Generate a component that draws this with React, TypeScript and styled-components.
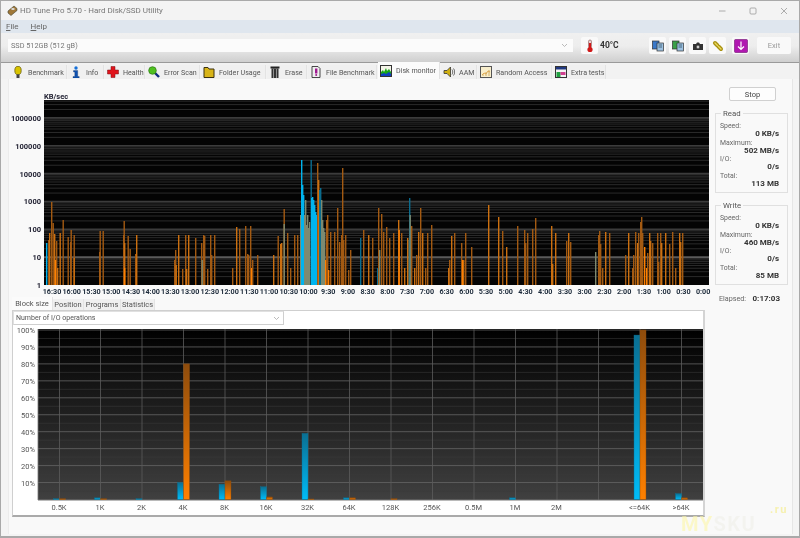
import React from 'react'
import styled, { createGlobalStyle } from 'styled-components'

const GlobalStyle = createGlobalStyle`
  html, body { margin: 0; padding: 0; background: #f4f4f4; }
  * { box-sizing: border-box; }
  body { font-family: Roboto, "Liberation Sans", Arial, sans-serif; }
`

const Win = styled.div`
  width: 800px;
  height: 538px;
  display: flex;
  flex-direction: column;
  background: #f4f4f4;
  border: 1px solid #a9a9a9;
  border-bottom-width: 2px;
  overflow: hidden;
  color: #4a4a4a;
  font-size: 8px;
  filter: blur(0.4px);
`
const TitleBar = styled.div`
  height: 19px;
  display: flex;
  align-items: center;
  padding-left: 6px;
  background: #f3f3f3;
`
const TitleText = styled.div`
  flex: 1;
  margin-left: 2px;
  font-size: 8px;
  color: #777;
`
const WinButton = styled.div`
  width: 31px;
  height: 19px;
  display: flex;
  align-items: center;
  justify-content: center;
`
const MenuBar = styled.div`
  height: 13px;
  display: flex;
  align-items: center;
  gap: 12px;
  padding-left: 5px;
  background: #dfe6ee;
  font-size: 8px;
  color: #666;
  u { text-decoration: underline; }
`
const ToolBar = styled.div`
  height: 30px;
  display: flex;
  align-items: flex-start;
  padding: 6px 0 0 7px;
  background: linear-gradient(#f0f0f0 0%, #ededed 45%, #cfcfcf 100%);
  border-bottom: 1px solid #9a9a9a;
`
const DriveSelect = styled.div`
  flex: 0 0 565px;
  height: 13px;
  display: flex;
  align-items: center;
  justify-content: space-between;
  padding: 0 5px 0 3px;
  background: #fbfbfb;
  color: #777;
  font-size: 7.3px;
`
const IconButton = styled.div<{ $ml?: number; $wide?: boolean }>`
  width: ${(p) => (p.$wide ? 34 : 17)}px;
  height: 17px;
  margin-top: -2px;
  margin-left: ${(p) => p.$ml ?? 0}px;
  display: flex;
  align-items: center;
  justify-content: center;
  background: #f9f9f9;
  border-radius: 2px;
  color: #999;
  font-size: 7.5px;
`
const Temp = styled.div`
  width: 30px;
  margin-left: 2px;
  height: 13px;
  line-height: 13px;
  font-size: 8.5px;
  font-weight: bold;
  color: #333;
`
const TabRow = styled.div`
  height: 16px;
  display: flex;
  align-items: flex-end;
  padding-left: 9px;
  background: #f2f2f2;
`
const Tab = styled.div<{ $w: number; $active?: boolean }>`
  width: ${(p) => p.$w}px;
  height: ${(p) => (p.$active ? 17 : 14)}px;
  display: flex;
  align-items: center;
  gap: 4px;
  padding-left: 2px;
  margin-right: 1px;
  background: ${(p) => (p.$active ? '#fbfbfb' : '#f0f0f0')};
  border-right: 1px solid #e3e3e3;
  font-size: 7.1px;
  color: #555;
  white-space: nowrap;
  svg { flex-shrink: 0; }
`
const Body = styled.div`
  flex: 1;
  display: flex;
  padding-left: 7px;
  min-height: 0;
`
const Panel = styled.div`
  width: 785px;
  height: 455px;
  display: flex;
  background: #f9f9f9;
  border-left: 1px solid #ececec;
  border-right: 1px solid #e6e6e6;
`
const LeftCol = styled.div`
  width: 703px;
  display: flex;
  flex-direction: column;
  padding-top: 14px;
`
const RightCol = styled.div`
  width: 80px;
  display: flex;
  flex-direction: column;
  align-items: flex-start;
  padding: 8px 0 0 3px;
`
const Stop = styled.div`
  width: 47px;
  height: 14px;
  margin-left: 14px;
  display: flex;
  align-items: center;
  justify-content: center;
  background: #fdfdfd;
  border: 1px solid #d0d0d0;
  border-radius: 2px;
  font-size: 7.5px;
  color: #444;
`
const Group = styled.div`
  position: relative;
  width: 73px;
  height: 80px;
  margin-top: 12px;
  padding: 8px 8px 0 4px;
  border: 1px solid #e0e0e0;
`
const GroupTitle = styled.div`
  position: absolute;
  top: -5px;
  left: 5px;
  padding: 0 2px;
  background: #f9f9f9;
  font-size: 7.8px;
  line-height: 9px;
  color: #555;
`
const StatLabel = styled.div`
  height: 8px;
  line-height: 8px;
  font-size: 6.9px;
  color: #666;
`
const StatValue = styled.div`
  height: 8.5px;
  line-height: 8.5px;
  text-align: right;
  font-size: 8px;
  font-weight: bold;
  color: #333;
`
const Elapsed = styled.div`
  width: 65px;
  margin-top: 9px;
  display: flex;
  justify-content: space-between;
  padding-left: 4px;
  font-size: 7.2px;
  color: #666;
  b { font-size: 8px; color: #333; }
`
const SubTabs = styled.div`
  height: 13px;
  display: flex;
  align-items: flex-end;
  padding-left: 3px;
`
const SubTab = styled.div<{ $w: number; $active?: boolean }>`
  width: ${(p) => p.$w}px;
  height: ${(p) => (p.$active ? 13 : 11)}px;
  display: flex;
  align-items: center;
  justify-content: center;
  background: ${(p) => (p.$active ? '#fbfbfb' : '#f0f0f0')};
  border-right: 1px solid #e4e4e4;
  font-size: 7.5px;
  color: #555;
`
const BlockBox = styled.div`
  width: 693px;
  height: 207px;
  margin-left: 3px;
  background: #fff;
  border: 1px solid #cfcfcf;
  border-right: 2px solid #d4d4d4;
  border-bottom: 2px solid #aaa;
`
const OpSelect = styled.div`
  width: 271px;
  height: 14px;
  display: flex;
  align-items: center;
  justify-content: space-between;
  padding: 0 3px 0 2px;
  background: #fff;
  border: 1px solid #e0e0e0;
  border-right-color: #cfcfcf;
  border-bottom-color: #cfcfcf;
  font-size: 7px;
  color: #555;
`
const ChartSvg = styled.svg`
  display: block;
  font-family: Roboto, "Liberation Sans", Arial, sans-serif;
`
const Watermark = styled.div`
  position: absolute;
  left: 681px;
  top: 512px;
  font-size: 20px;
  font-weight: bold;
  letter-spacing: 1.5px;
  color: #fdf7a8;
  opacity: 0.6;
  pointer-events: none;
  span { color: #f0f0ea; }
  i { position: absolute; left: 89px; top: -9px; font-size: 11px; font-style: normal; color: #f5ec80; }
`
const Root = styled.div`
  position: relative;
  width: 800px;
  height: 538px;
`

const Chevron = () => (
  <svg width="7" height="5" viewBox="0 0 7 5">
    <path d="M1 1l2.5 2.5L6 1" fill="none" stroke="#aaa" strokeWidth="0.8" />
  </svg>
)

// [x, top y, tone]: tone 0 dim, 1 mid, 2 bright, 3 blue, 4 dim blue, 5 grey green
type Bar = [number, number, number?]
const bars: Bar[] = [
  [46, 243, 3], [48, 240], [49, 233, 1], [51, 202], [52.5, 223], [54, 234, 1], [55, 260, 2], [56, 241], [57, 268, 1],
  [59.5, 233, 1], [62.5, 220], [67.5, 237], [70, 242], [70.5, 230], [73.5, 235], [73.5, 258, 1],
  [99, 252], [99.5, 231], [102.5, 231], [123, 235], [123.5, 221], [124, 243, 1], [124, 268, 2], [127.5, 236], [129.5, 249],
  [135, 254], [136, 235, 1], [174, 260], [175, 250], [175.5, 265, 1], [178, 235, 1], [182, 269], [185, 235], [186, 269, 1], [188, 235, 1],
  [195, 238], [201, 243], [201.5, 260, 5], [203, 235], [204, 236], [207, 269], [210, 235], [211, 255], [214, 235],
  [232, 268], [236, 227, 1], [239, 229], [245, 226], [247, 254], [248, 255], [250, 226], [251, 268, 2], [252, 260], [257, 255],
  [273, 255, 1], [277.5, 236], [280, 244, 1], [281, 243, 1], [283.5, 209], [283.5, 224, 5], [287, 233], [290, 268], [294, 235], [297, 235],
  [300, 215, 5], [301, 160, 3], [302, 185, 3], [303, 195, 3], [304, 215, 5], [305, 200, 5], [306, 225, 5], [307, 215, 5], [308, 228, 5], [309, 222, 5],
  [310.5, 160, 4], [311, 198, 3], [312, 197, 3], [313, 200, 3], [314, 205, 3], [315, 212, 3], [316, 215, 3], [317, 163], [318, 180, 1], [319, 190, 4], [320, 188, 4], [321, 200, 5], [322, 220, 5], [323, 228, 5], [324, 232, 5],
  [325, 260, 2], [326, 220], [327, 215], [328, 270, 2], [330, 232], [334, 232], [337, 208], [339, 242], [341, 235], [342, 168], [343, 240], [345, 235],
  [348, 270], [350, 250], [360, 238, 4], [363, 230], [368, 235, 1], [372, 238], [377, 268, 4], [378, 208], [379, 250, 5], [381, 214], [383, 232], [386, 227], [389, 238], [393, 233], [398, 220, 1], [398.5, 230, 2],
  [401, 233], [404, 268, 1], [407, 238, 1], [408.5, 240, 5], [409, 198, 4], [409.5, 215, 5], [411, 226], [414, 268, 1], [416, 255], [418, 232, 1], [420, 208], [422, 233, 1], [425, 268], [427, 233], [431, 225],
  [448, 268, 1], [449, 260], [451, 236, 1], [454, 233], [461, 243], [462, 260, 2], [463, 260, 1], [465, 233], [471, 247],
  [488, 205, 1], [498, 217, 1], [502, 231], [506, 247, 1], [517, 226], [524, 230], [525, 243], [527, 233], [532, 229], [535, 218],
  [551, 226, 1], [552, 264, 1], [555, 233, 1], [566, 241], [568, 233, 1], [570, 242],
  [595, 252, 5], [598, 235], [599, 231], [600, 244], [602, 268], [605, 232, 1], [609, 233], [625, 255], [628, 233, 1], [632, 268],
  [633, 255], [635, 232], [637, 243, 1], [638, 233], [640, 222], [641, 217], [642, 233], [644, 247, 2], [646, 268, 2], [647, 253], [649, 233, 1], [650, 241, 1],
  [652, 243], [657, 233], [658, 262], [660, 233], [661, 243, 1], [665, 233, 1], [669, 244], [672, 232], [675, 268], [679, 233, 1], [680, 242, 1], [682, 233],
]
const tones = ['#a35a12', '#cc7010', '#ff8000', '#00b4ee', '#0a6c8e', '#7d8a70']

const times = ['16:30', '16:00', '15:30', '15:00', '14:30', '14:00', '13:30', '13:00', '12:30', '12:00', '11:30', '11:00', '10:30', '10:00', '9:30', '9:00', '8:30', '8:00', '7:30', '7:00', '6:30', '6:00', '5:30', '5:00', '4:30', '4:00', '3:30', '3:00', '2:30', '2:00', '1:30', '1:00', '0:30', '0:00']

const ox = 9 // svg origin inside the page
const oy = 93
const MonitorChart = () => {
  const decades = [0, 1, 2, 3, 4, 5, 6, 7]
  const lines: React.ReactNode[] = []
  decades.forEach((d) => {
    const base = 285 - d * 27.85
    ;[2, 3, 4, 5, 6, 7, 8, 9].forEach((m) => {
      const y = base - Math.log10(m) * 27.85
      if (y > 100) lines.push(<line key={`${d}-${m}`} x1={44 - ox} x2={709 - ox} y1={y - oy} y2={y - oy} stroke="#2b2b2b" strokeWidth="1" />)
    })
    if (base < 285) lines.push(<line key={`d${d}`} x1={44 - ox} x2={709 - ox} y1={base - oy} y2={base - oy} stroke={d === 1 ? '#5a5a5a' : '#3c3c3c'} strokeWidth="1.6" />)
  })
  const yLabels = ['1', '10', '100', '1000', '10000', '100000', '1000000']
  return (
    <ChartSvg width="703" height="204" viewBox="0 0 703 204">
      <text x={44 - ox} y="6" fontSize="7.5" fontWeight="bold" fill="#223">KB/sec</text>
      <rect x={44 - ox} y={100 - oy} width="665" height="185" fill="#040404" />
      {lines}
      {bars.map(([x, top, tone = 0], i) => (
        <rect key={i} x={x - ox} y={top - oy} width="1.4" height={285 - top} fill={tones[tone]} />
      ))}
      {yLabels.map((t, i) => (
        <text key={t} x={41 - ox} y={285 - i * 27.85 + 3 - oy} fontSize="7.5" fontWeight="bold" textAnchor="end" fill="#223">{t}</text>
      ))}
      {times.map((t, i) => (
        <text key={t} x={52 + i * 19.73 - ox} y={294 - oy} fontSize="7.2" fontWeight="bold" textAnchor="middle" fill="#1c2a3a">{t}</text>
      ))}
    </ChartSvg>
  )
}

// center x in page, label, read %, write %
const sizes: [number, string, number, number][] = [
  [59.5, '0.5K', 0.5, 0.5], [100.5, '1K', 1, 0.5], [142, '2K', 0.5, 0], [183.5, '4K', 10, 80], [225, '8K', 9, 11],
  [266.5, '16K', 7.5, 1.5], [308, '32K', 39, 0.3], [349.5, '64K', 1, 1], [391, '128K', 0, 0.5], [432.5, '256K', 0, 0],
  [474, '0.5M', 0, 0], [515.5, '1M', 1, 0], [557, '2M', 0, 0], [640, '<=64K', 97, 100], [681.5, '>64K', 3.5, 1],
]
const bx = 13
const by = 325
const BlockChart = () => {
  const py = (pct: number) => 499.5 - pct * 1.695 - by
  const pcts = [10, 20, 30, 40, 50, 60, 70, 80, 90, 100]
  const half = [5, 15, 25, 35, 45, 55, 65, 75, 85, 95]
  return (
    <ChartSvg width="690" height="190" viewBox="0 0 690 190">
      <defs>
        <linearGradient id="plot" x1="0" y1="0" x2="0" y2="1">
          <stop offset="0" stopColor="#000" />
          <stop offset="1" stopColor="#404040" />
        </linearGradient>
        <linearGradient id="blue" x1="0" y1="0" x2="0" y2="1">
          <stop offset="0" stopColor="#0a6f92" />
          <stop offset="1" stopColor="#00bcf8" />
        </linearGradient>
        <linearGradient id="orange" x1="0" y1="0" x2="0" y2="1">
          <stop offset="0" stopColor="#8e4c0c" />
          <stop offset="1" stopColor="#ff8000" />
        </linearGradient>
      </defs>
      <rect x={38 - bx} y={329 - by} width="665" height={500 - 329} fill="url(#plot)" />
      {half.map((p) => (
        <line key={p} x1={38 - bx} x2={703 - bx} y1={py(p)} y2={py(p)} stroke="#3a3a3a" strokeWidth="0.8" opacity="0.7" />
      ))}
      {pcts.map((p) => (
        <React.Fragment key={p}>
          <line x1={38 - bx} x2={703 - bx} y1={py(p)} y2={py(p)} stroke="#666" strokeWidth="0.8" />
          <text x={35 - bx} y={py(p) + 3} fontSize="7.5" textAnchor="end" fill="#555">{p}%</text>
        </React.Fragment>
      ))}
      {sizes.map(([x]) => (
        <line key={x} x1={x - bx} x2={x - bx} y1={329 - by} y2={500 - by} stroke="#5c5c5c" strokeWidth="0.8" />
      ))}
      <line x1={598.5 - bx} x2={598.5 - bx} y1={329 - by} y2={500 - by} stroke="#5c5c5c" strokeWidth="0.8" />
      <line x1={38 - bx} x2={38 - bx} y1={329 - by} y2={500 - by} stroke="#777" strokeWidth="0.8" />
      <line x1={38 - bx} x2={703 - bx} y1={500 - by} y2={500 - by} stroke="#777" strokeWidth="1" />
      {sizes.map(([x, label, r, w]) => (
        <React.Fragment key={label}>
          {r > 0 && <rect x={x - 6 - bx} y={py(r)} width="6" height={r * 1.695} fill="url(#blue)" stroke="#0a6f92" strokeWidth="0.4" />}
          {w > 0 && <rect x={x - bx} y={py(w)} width="6" height={w * 1.695} fill="url(#orange)" stroke="#8e4c0c" strokeWidth="0.4" />}
          <text x={x - 0.5 - bx} y={510 - by} fontSize="7.5" textAnchor="middle" fill="#555">{label}</text>
        </React.Fragment>
      ))}
    </ChartSvg>
  )
}

// small bitmap like glyphs of the program, drawn by hand
const icons: Record<string, React.ReactNode> = {
  bulb: (
    <>
      <ellipse cx="6" cy="4.5" rx="3.2" ry="4.2" fill="#d9c400" stroke="#6a6010" strokeWidth="0.8" />
      <rect x="4.5" y="8.5" width="3" height="3.5" fill="#444" />
    </>
  ),
  info: (
    <>
      <circle cx="6" cy="2" r="1.7" fill="#1670d8" />
      <path d="M3.5 4.5h4.2v6H9.2V12H3v-1.5h1.8v-4.5H3.5z" fill="#0f52b0" stroke="#0a2c60" strokeWidth="0.3" />
    </>
  ),
  cross: <path d="M4 .5h4v3.5h3.5v4H8v3.5H4V8H.5V4H4z" fill="#e0141c" stroke="#7a1014" strokeWidth="0.5" />,
  scan: (
    <>
      <path d="M7 7l4 4" stroke="#102a80" strokeWidth="2.4" />
      <circle cx="4.5" cy="4.5" r="3.8" fill="#50c020" stroke="#2a7a10" strokeWidth="0.7" />
    </>
  ),
  folder: <path d="M1 1.5h4l1 1.5h5v8.5H1z" fill="#d8b418" stroke="#3a3010" strokeWidth="1" />,
  trash: (
    <>
      <rect x="2.5" y="2.5" width="7" height="9.5" fill="#333" />
      <path d="M4.5 3v9M7.5 3v9" stroke="#aaa" strokeWidth="0.8" />
      <rect x="1.5" y="0.5" width="9" height="2" fill="#222" />
    </>
  ),
  file: (
    <>
      <path d="M2 .5h6l2 2v9H2z" fill="#eee" stroke="#333" strokeWidth="0.9" />
      <rect x="5" y="2.5" width="2.4" height="5" fill="#a01890" />
      <circle cx="6.2" cy="9" r="1" fill="#a01890" />
    </>
  ),
  monitor: (
    <>
      <rect x="0.5" y="0.5" width="11" height="11" fill="#f4f4e8" stroke="#333" />
      <path d="M1 11V7l2-2 1 2 2-4 1 3 2-2 2 3v4z" fill="#18a818" />
      <path d="M1 11V9l3-1 2 1 3-2 2 2v2z" fill="#1040c0" />
    </>
  ),
  speaker: (
    <>
      <path d="M1 4.5h3L7.5 1v10L4 7.5H1z" fill="#d0b010" stroke="#333" strokeWidth="0.8" />
      <path d="M9 3.5c1 1.4 1 3.6 0 5M10.5 2.5c1.6 2 1.6 5 0 7" stroke="#333" strokeWidth="0.7" fill="none" />
    </>
  ),
  random: (
    <>
      <rect x="0.5" y="0.5" width="11" height="11" fill="#f8eecc" stroke="#555" />
      <path d="M2 9l2-2 2 1 2-3 2 1" stroke="#e09020" strokeWidth="0.7" fill="none" />
      <path d="M3 10V8M6 10V6M9 10V4" stroke="#c8a050" strokeWidth="0.8" />
    </>
  ),
  extra: (
    <>
      <rect x="0.5" y="0.5" width="11" height="11" fill="#f4f4f4" stroke="#333" />
      <rect x="1" y="1" width="10" height="2.5" fill="#203880" />
      <rect x="1.5" y="6" width="4" height="5" fill="#20a040" />
      <rect x="5.5" y="6" width="5" height="3" fill="#d04090" />
    </>
  ),
}
const Icon = ({ name }: { name: string }) => (
  <svg width="12" height="12" viewBox="0 0 12 12">{icons[name]}</svg>
)

const tabs: [string, string, number][] = [
  ['bulb', 'Benchmark', 57], ['info', 'Info', 36], ['cross', 'Health', 40], ['scan', 'Error Scan', 54],
  ['folder', 'Folder Usage', 65], ['trash', 'Erase', 40], ['file', 'File Benchmark', 69],
  ['monitor', 'Disk monitor', 62], ['speaker', 'AAM', 36], ['random', 'Random Access', 74], ['extra', 'Extra tests', 53],
]

const CopyIcon = ({ color }: { color: string }) => (
  <svg width="12" height="12" viewBox="0 0 12 12">
    <rect x="0.5" y="1" width="6.5" height="8" fill={color} stroke="#333" strokeWidth="0.7" />
    <rect x="5" y="3" width="6.5" height="8" fill="#9cc0e0" stroke="#333" strokeWidth="0.7" />
    <path d="M6.5 5h3.5M6.5 7h3.5" stroke="#245" strokeWidth="0.7" />
  </svg>
)

const Stats = ({ values }: { values: string[] }) => (
  <>
    <StatLabel>Speed:</StatLabel>
    <StatValue>{values[0]}</StatValue>
    <StatLabel>Maximum:</StatLabel>
    <StatValue>{values[1]}</StatValue>
    <StatLabel>I/O:</StatLabel>
    <StatValue>{values[2]}</StatValue>
    <StatLabel>Total:</StatLabel>
    <StatValue>{values[3]}</StatValue>
  </>
)

export default function App() {
  return (
    <Root>
      <GlobalStyle />
      <Win>
        <TitleBar>
          <svg width="11" height="11" viewBox="0 0 11 11">
            <path d="M1 6l6-5 3 2.5v2L4 10.5 1 8z" fill="#a07838" stroke="#443" strokeWidth="0.6" />
            <ellipse cx="6" cy="4" rx="1.8" ry="1" fill="#ddd" />
          </svg>
          <TitleText>HD Tune Pro 5.70 - Hard Disk/SSD Utility</TitleText>
          <WinButton>
            <svg width="8" height="8" viewBox="0 0 8 8"><path d="M1 4h6.5" stroke="#999" strokeWidth="0.8" /></svg>
          </WinButton>
          <WinButton>
            <svg width="8" height="8" viewBox="0 0 8 8"><rect x="1" y="1" width="6" height="6" rx="1" fill="none" stroke="#999" strokeWidth="0.8" /></svg>
          </WinButton>
          <WinButton>
            <svg width="8" height="8" viewBox="0 0 8 8"><path d="M1 1l6 6M7 1L1 7" stroke="#999" strokeWidth="0.8" /></svg>
          </WinButton>
        </TitleBar>
        <MenuBar>
          <span><u>F</u>ile</span>
          <span><u>H</u>elp</span>
        </MenuBar>
        <ToolBar>
          <DriveSelect>SSD 512GB (512 gB)<Chevron /></DriveSelect>
          <IconButton $ml={8}>
            <svg width="12" height="14" viewBox="0 0 12 14">
              <rect x="4.5" y="1" width="3" height="8" rx="1.4" fill="#e8d0d0" stroke="#733" strokeWidth="0.5" />
              <rect x="5" y="4" width="2" height="6" fill="#d01818" />
              <circle cx="6" cy="10.5" r="2.6" fill="#d01818" />
            </svg>
          </IconButton>
          <Temp>40°C</Temp>
          <IconButton $ml={19}><CopyIcon color="#3a78c8" /></IconButton>
          <IconButton $ml={3}><CopyIcon color="#3aa048" /></IconButton>
          <IconButton $ml={3}>
            <svg width="12" height="12" viewBox="0 0 12 12">
              <path d="M1 4h3l1-1.5h2L8 4h3v6H1z" fill="#333" />
              <circle cx="6" cy="7" r="1.9" fill="#ccc" stroke="#111" strokeWidth="0.6" />
            </svg>
          </IconButton>
          <IconButton $ml={3}>
            <svg width="12" height="12" viewBox="0 0 12 12">
              <path d="M3 3l2.5 2.5M6.5 6.5L9 9" stroke="#a89010" strokeWidth="4" strokeLinecap="round" />
              <path d="M3 3l2.5 2.5M6.5 6.5L9 9" stroke="#e8d860" strokeWidth="1.4" strokeLinecap="round" />
            </svg>
          </IconButton>
          <IconButton $ml={6}>
            <svg width="14" height="14" viewBox="0 0 14 14">
              <rect x="0.5" y="0.5" width="13" height="13" rx="1" fill="#b018b0" stroke="#701070" strokeWidth="0.6" />
              <path d="M7 2.5v8M4 7.5l3 3 3-3" stroke="#fff" strokeWidth="1.2" fill="none" />
            </svg>
          </IconButton>
          <IconButton $ml={8} $wide>Exit</IconButton>
        </ToolBar>
        <TabRow>
          {tabs.map(([icon, label, w]) => (
            <Tab key={label} $w={w} $active={label === 'Disk monitor'}>
              <Icon name={icon} />
              {label}
            </Tab>
          ))}
        </TabRow>
        <Body>
          <Panel>
            <LeftCol>
              <MonitorChart />
              <SubTabs>
                <SubTab $w={41} $active>Block size</SubTab>
                <SubTab $w={31}>Position</SubTab>
                <SubTab $w={37}>Programs</SubTab>
                <SubTab $w={34}>Statistics</SubTab>
              </SubTabs>
              <BlockBox>
                <OpSelect>Number of I/O operations<Chevron /></OpSelect>
                <BlockChart />
              </BlockBox>
            </LeftCol>
            <RightCol>
              <Stop>Stop</Stop>
              <Group>
                <GroupTitle>Read</GroupTitle>
                <Stats values={['0 KB/s', '502 MB/s', '0/s', '113 MB']} />
              </Group>
              <Group>
                <GroupTitle>Write</GroupTitle>
                <Stats values={['0 KB/s', '460 MB/s', '0/s', '85 MB']} />
              </Group>
              <Elapsed>Elapsed: <b>0:17:03</b></Elapsed>
            </RightCol>
          </Panel>
        </Body>
      </Win>
      <Watermark>MY<span>SKU</span><i>.ru</i></Watermark>
    </Root>
  )
}
